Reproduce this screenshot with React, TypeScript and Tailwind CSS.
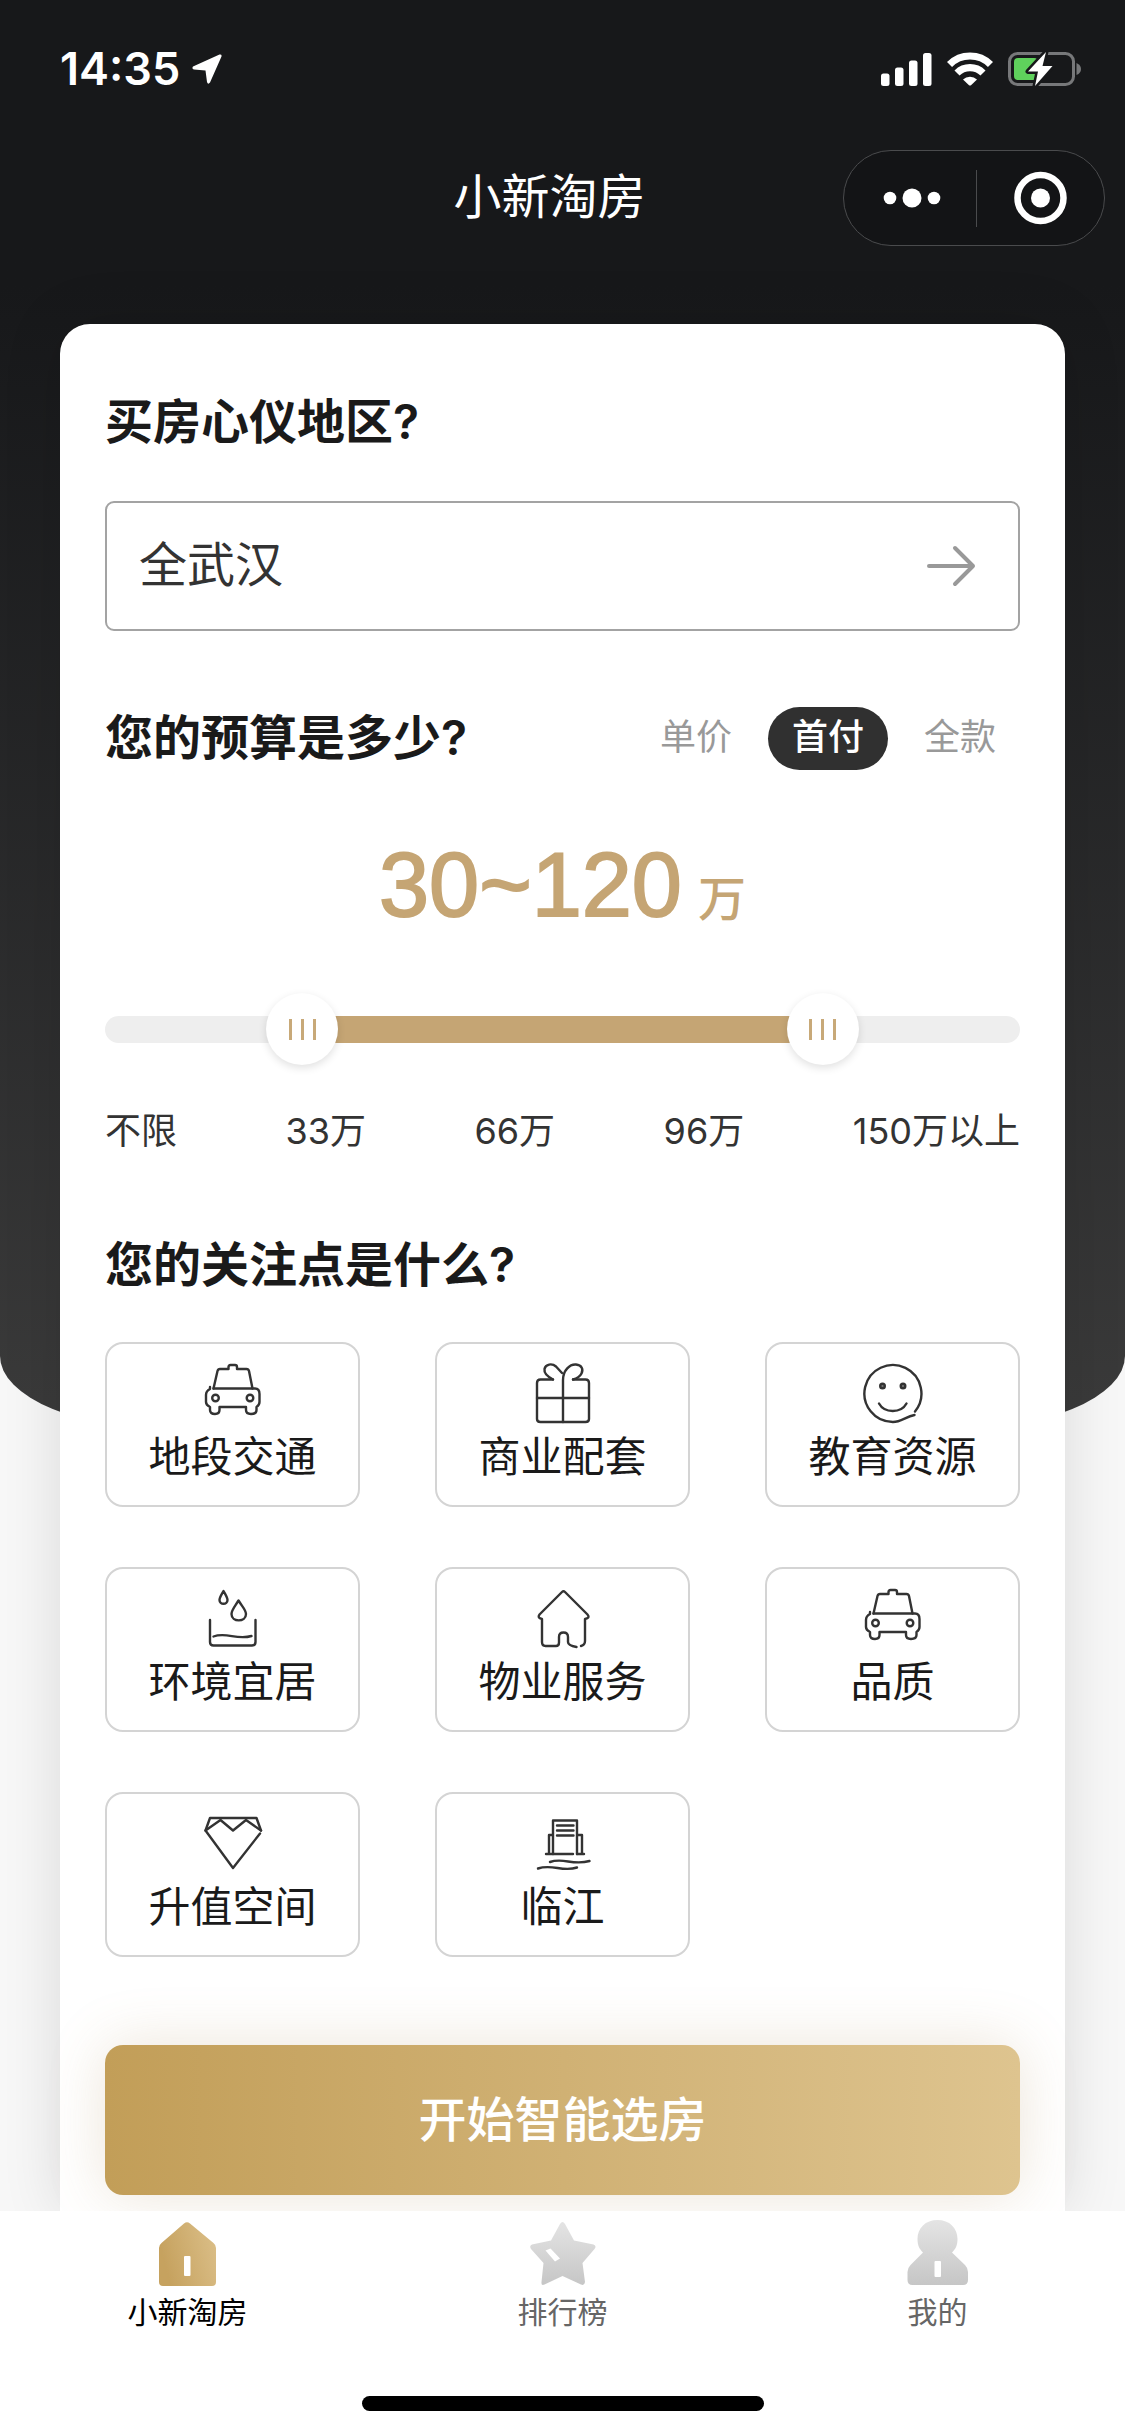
import React, { useState } from 'react'

interface IconProps {
  className?: string;
}

interface FocusItem {
  label: string;
  Icon: React.FC<IconProps>;
}

const LineIcon: React.FC<{ children: React.ReactNode }> = ({ children }) => (
  <svg
    viewBox="0 0 60 62"
    className="w-[60px] h-[62px]"
    fill="none"
    stroke="#333333"
    strokeWidth="2.400"
    strokeLinecap="round"
    strokeLinejoin="round"
    aria-hidden="true"
  >
    {children}
  </svg>
);

const CarIcon = () => (
  <LineIcon>
    <path d="M10.500 26.500 14.500 9Q15 7 17 7H25.500V5Q25.500 3 27.500 3H32Q34 3 34 5V7H43.500Q45.500 7 46 9L49.500 26.500" />
    <path d="M10.500 26.500H52Q56.500 26.500 56.500 32V40Q56.500 43 53.500 45V48Q53.500 52 48 52 43 52 43 48V45H16.500V48Q16.500 52 12 52 7 52 7 48V45Q3 43 3 40V33Q3 29 7 27V25" />
    <circle cx="12.500" cy="36" r="3.300" />
    <circle cx="47" cy="36" r="3.300" />
  </LineIcon>
);

const GiftIcon = () => (
  <LineIcon>
    <path d="M20 17.500H7.500Q4 17.500 4 21V57Q4 60 7.500 60H52.500Q56 60 56 57V21Q56 17.500 52.500 17.500H40" />
    <path d="M20 17.500C13.500 14 11 10 11.500 7 12.500 2 19 1 23 4.500L29 11" />
    <path d="M30 60V18C30 8 37 2 43 2.500 49 3 50.500 7.500 48.500 11.500 47 14.500 44 16.500 40 17.500" />
    <path d="M4 36H56" />
  </LineIcon>
);

const SmileIcon = () => (
  <LineIcon>
    <path d="M52 49.500A28.500 28.500 0 1 0 30 60C38 60 43 54.500 51.500 53" />
    <circle cx="19.500" cy="24" r="2.300" fill="#777777" />
    <circle cx="40" cy="24" r="2.300" fill="#777777" />
    <path d="M16 41.500C21.500 51.500 38 51.500 43.500 41.500" />
  </LineIcon>
);

const WaterIcon = () => (
  <LineIcon>
    <path d="M20.500 4C18 8.500 16.500 10.500 16.500 13 16.500 18 24.500 18 24.500 13 24.500 10.500 23 8.500 20.500 4Z" />
    <path d="M35.500 13.500C31.500 20 28.500 23 28.500 27 28.500 35.500 43 35.500 43 27 43 23 39.500 20 35.500 13.500Z" />
    <path d="M7 33V55Q7 58.500 10.500 58.500H49Q52.500 58.500 52.500 55V33" />
    <path d="M10.500 49.500C23.500 44.500 33.500 53.500 48.500 49" />
  </LineIcon>
);

const HouseIcon = () => (
  <LineIcon>
    <path d="M48 59Q52 58 52 54V32Q57.500 31 54.500 27.500L32 5Q30.500 3.500 29 5L6.500 27.500Q4 31 9 32V55Q9 59 12.500 59H23Q26 59 26 55.500V50Q26 45.500 30.500 45.500 35 45.500 35 50V55Q35 58.500 43.500 60" />
  </LineIcon>
);

const DiamondIcon = () => (
  <LineIcon>
    <path d="M58 18.500 53.500 6H7L2.500 18.500 30 56 57 21.500" />
    <path d="M2.500 18.500 17.500 8 30 18.500 43 8 58 18.500" />
  </LineIcon>
);

const RiverIcon = () => (
  <LineIcon>
    <path d="M20 42V8.500H44V42" />
    <path d="M24 13.500H40.500M24 18.500H40.500M24 23.500H40.500" />
    <path d="M19.500 23H16V42M44.500 23H49V42M13 42H40M44 42H51" />
    <path d="M17 50C30.500 45 39.500 54 56.500 49M5 56.500C19.500 51.500 29.500 60.500 44 55.500" />
  </LineIcon>
);

const TabHomeIcon = () => (
  <svg viewBox="0 0 66 66" className="w-[66px] h-[66px]" aria-hidden="true">
    <defs>
      <linearGradient id="tabGold" x1="0" x2="1" y1="0.3" y2="0">
        <stop offset="0" stopColor="#c6a25f" />
        <stop offset="1" stopColor="#dcc08a" />
      </linearGradient>
    </defs>
    <path d="M29 3.500Q32 1 35 3.500L58.500 23Q61 25 61 28V62Q61 66 57 66H8Q4 66 4 62V28Q4 25 6.500 23Z" fill="url(#tabGold)" />
    <rect x="29" y="36" width="6.500" height="20" rx="1" fill="#ffffff" />
  </svg>
);

const TabStarIcon = () => (
  <svg viewBox="0 0 66 66" className="w-[66px] h-[66px]" aria-hidden="true">
    <defs>
      <linearGradient id="tabGray" x1="0" x2="0" y1="0" y2="1">
        <stop offset="0" stopColor="#e4e4e4" />
        <stop offset="1" stopColor="#c6c6c6" />
      </linearGradient>
    </defs>
    <path d="M30 4Q32.500 0 35 4L44 20.500 63.500 24.500Q67 26 64.500 29L52.500 43 55 62Q54.500 66 51 64.500L32.500 56 14.500 64.500Q11 66 11.500 62L13.500 43 1 29Q-1 26 2 24.500L21 20.500Z" fill="url(#tabGray)" />
    <path d="M15.500 30.500 20.500 28.500 30 38.500 25 41.500Z" fill="#ffffff" />
  </svg>
);

const TabUserIcon = () => (
  <svg viewBox="0 0 66 66" className="w-[66px] h-[66px]" aria-hidden="true">
    <path d="M32.500 0C44.500 0 52.500 8 52.500 19 52.500 25.500 50.500 29 47 32.500L60 45Q63 48 63 52V60Q63 65 58 65H7.500Q2.500 65 2.500 60V52Q2.500 48 5.500 45L18 32.500C14.500 29 12.500 25.500 12.500 19 12.500 8 20.500 0 32.500 0Z" fill="url(#tabGray)" />
    <rect x="29.500" y="41" width="6.500" height="16" rx="1" fill="#ffffff" />
  </svg>
);

const focusItems: FocusItem[] = [
  { label: "地段交通", Icon: CarIcon },
  { label: "商业配套", Icon: GiftIcon },
  { label: "教育资源", Icon: SmileIcon },
  { label: "环境宜居", Icon: WaterIcon },
  { label: "物业服务", Icon: HouseIcon },
  { label: "品质", Icon: CarIcon },
  { label: "升值空间", Icon: DiamondIcon },
  { label: "临江", Icon: RiverIcon },
];

const tabs = [
  { label: "小新淘房", Icon: TabHomeIcon, active: true },
  { label: "排行榜", Icon: TabStarIcon, active: false },
  { label: "我的", Icon: TabUserIcon, active: false },
];

const priceTypes = ["单价", "首付", "全款"];
const marks = ["不限", "33万", "66万", "96万", "150万以上"];
const MAX_PRICE = 150;

const rangeClass =
  "absolute inset-y-0 -left-3 -right-3 h-[72px] appearance-none bg-transparent pointer-events-none outline-none [&::-webkit-slider-thumb]:appearance-none [&::-webkit-slider-thumb]:pointer-events-auto [&::-webkit-slider-thumb]:w-[72px] [&::-webkit-slider-thumb]:h-[72px] [&::-webkit-slider-thumb]:rounded-full [&::-webkit-slider-thumb]:bg-white [&::-webkit-slider-thumb]:bg-[repeating-linear-gradient(90deg,#c8a978_0_3px,transparent_3px_12px)] [&::-webkit-slider-thumb]:bg-[length:27px_21px] [&::-webkit-slider-thumb]:bg-center [&::-webkit-slider-thumb]:bg-no-repeat [&::-webkit-slider-thumb]:shadow-[0_3px_9px_rgba(0,0,0,0.12)]";

const StatusBar = () => (
  <div className="flex h-[132px] items-center justify-between pl-[60px] pr-[43px] pt-1.5 text-white">
    <div className="flex items-center gap-3">
      <span className="text-[45px] leading-[48px] font-semibold">14:35</span>
      <svg viewBox="0 0 30 30" className="w-[30px] h-[30px]" fill="currentColor" aria-hidden="true">
        <path d="M27.500.5 1 12.500Q-.5 15 2 15.500L13.500 16.500 15 28Q16 31 18 28.500L29.500 2.500Q30 0 27.500.5Z" />
      </svg>
    </div>
    <div className="flex items-center gap-[15px]">
      <svg viewBox="0 0 51 33" className="w-[51px] h-[33px]" fill="currentColor" aria-hidden="true">
        <rect x="0" y="20.500" width="8.500" height="12.500" rx="2.500" />
        <rect x="14" y="14.500" width="8.500" height="18.500" rx="2.500" />
        <rect x="28" y="7.500" width="8.500" height="25.500" rx="2.500" />
        <rect x="42" y="0" width="8.500" height="33" rx="2.500" />
      </svg>
      <svg viewBox="0 0 46 34" className="w-[46px] h-[34px]" aria-hidden="true">
        <g fill="none" stroke="currentColor" strokeWidth="7.200">
          <path d="M2.500 12.500A29 29 0 0 1 43.500 12.500" />
          <path d="M10 21A18.500 18.500 0 0 1 36 21" />
        </g>
        <path d="M16 27.500A10 10 0 0 1 30 27.500L24 33.200Q23 34 22 33.200Z" fill="currentColor" />
      </svg>
      <svg viewBox="0 0 74 36" className="w-[74px] h-[36px]" aria-hidden="true">
        <rect x="1.500" y="2.500" width="64" height="31" rx="8" fill="none" stroke="#77787a" strokeWidth="3" />
        <path d="M68.500 12Q73 14 73 18T68.500 24Z" fill="#77787a" />
        <rect x="6" y="7" width="24" height="22" rx="4" fill="#5fd15c" />
        <path d="M38 1 20 20.500H30L27 35 44.500 15H34.500Z" fill="#ffffff" stroke="#17181a" strokeWidth="5" strokeLinejoin="round" paintOrder="stroke" />
      </svg>
    </div>
  </div>
);

const NavBar = () => (
  <header className="grid h-[132px] grid-cols-[1fr_auto_1fr] items-center pr-5 text-white">
    <h1 className="col-start-2 pb-[3px] pr-1.5 text-[48px] leading-[72px]">小新淘房</h1>
    <div className="flex h-24 w-[262px] items-center justify-self-end rounded-full border border-[#4a4b4d] bg-[#131416]">
      <button type="button" aria-label="更多" className="flex h-full flex-1 items-center justify-center pl-1">
        <svg viewBox="0 0 60 24" className="w-[60px] h-6" fill="currentColor" aria-hidden="true">
          <circle cx="8" cy="12" r="6.300" />
          <circle cx="30" cy="12" r="9.500" />
          <circle cx="52" cy="12" r="6.300" />
        </svg>
      </button>
      <span className="h-[57px] w-px bg-[#4a4b4d]" />
      <button type="button" aria-label="关闭" className="flex h-full flex-1 items-center justify-center">
        <svg viewBox="0 0 54 54" className="w-[54px] h-[54px]" aria-hidden="true">
          <circle cx="27.500" cy="27" r="23" fill="none" stroke="currentColor" strokeWidth="6.500" />
          <circle cx="27.500" cy="27" r="9.500" fill="currentColor" />
        </svg>
      </button>
    </div>
  </header>
);

const BudgetSlider = () => {
  const [low, setLow] = useState(30)
  const [high, setHigh] = useState(120)

  const fill = {
    left: `${(low / MAX_PRICE) * 100}%`,
    right: `${100 - (high / MAX_PRICE) * 100}%`,
  };

  return (
    <div>
      <p className="mt-[51px] flex h-[120px] items-baseline justify-center gap-4 text-[#c5a574]">
        <span className="font-['Liberation_Sans',sans-serif] text-[90px] leading-[120px] [-webkit-text-stroke:2px_#c5a574]">
          {low}~{high}
        </span>
        <span className="text-[48px] font-medium">万</span>
      </p>
      <div className="relative mt-12 flex h-[72px] items-center">
        <div className="relative h-[27px] w-full overflow-hidden rounded-full bg-[#eeeeee]">
          <div className="absolute inset-y-0 bg-[#c5a574]" style={fill} />
        </div>
        <input
          type="range"
          aria-label="最低预算"
          min={0}
          max={MAX_PRICE}
          value={low}
          onChange={(e) => setLow(Math.min(Number(e.target.value), high - 1))}
          className={rangeClass}
        />
        <input
          type="range"
          aria-label="最高预算"
          min={0}
          max={MAX_PRICE}
          value={high}
          onChange={(e) => setHigh(Math.max(Number(e.target.value), low + 1))}
          className={rangeClass}
        />
      </div>
      <div className="mt-[42px] flex justify-between text-[36px] leading-[48px] text-[#333333]">
        {marks.map((mark) => (
          <span key={mark}>{mark}</span>
        ))}
      </div>
    </div>
  );
};

const App: React.FC = () => {
  const [priceType, setPriceType] = useState("首付")
  const [picked, setPicked] = useState<string[]>([])

  const togglePicked = (label: string) => {
    setPicked((prev) =>
      prev.includes(label) ? prev.filter((p) => p !== label) : [...prev, label]
    );
  };

  return (
    <div className="relative isolate flex min-h-screen flex-col bg-[#f7f7f7] font-['Inter','Noto_Sans_CJK_SC',sans-serif] text-[#1a1a1a]">
      {/* dark backdrop behind the header and the top of the card */}
      <div className="absolute inset-x-0 top-0 -z-10 h-[1431px] rounded-b-[180px_75px] bg-linear-to-b from-[#17181a] from-20% to-[#3b3b3b]" />

      <StatusBar />
      <NavBar />

      <main className="mx-[60px] mt-[60px] flex-1 rounded-t-[30px] bg-white px-[45px] pb-[15px] pt-[62px] shadow-[0_0_60px_rgba(0,0,0,0.12)]">
        <section>
          <h2 className="text-[48px] leading-[72px] font-semibold">买房心仪地区?</h2>
          <button
            type="button"
            className="mt-[43px] flex h-[130px] w-full items-center justify-between rounded-[9px] border-2 border-[#a3a3a3] pl-8 pr-[42px] text-[48px] text-[#333333]"
          >
            <span className="pb-[3px]">全武汉</span>
            <svg viewBox="0 0 50 42" className="w-[50px] h-[42px]" fill="none" stroke="#999999" strokeWidth="4" strokeLinecap="round" strokeLinejoin="round" aria-hidden="true">
              <path d="M3 21H47M29 3 47 21 29 39" />
            </svg>
          </button>
        </section>

        <section>
          <div className="mt-[71px] flex items-center justify-between">
            <h2 className="text-[48px] leading-[72px] font-semibold">您的预算是多少?</h2>
            <div className="flex gap-3">
              {priceTypes.map((type) => (
                <button
                  key={type}
                  type="button"
                  aria-pressed={type === priceType}
                  onClick={() => setPriceType(type)}
                  className={
                    type === priceType
                      ? "h-[63px] w-[120px] rounded-full bg-[#303030] pb-[3px] text-[36px] leading-[48px] font-medium text-white"
                      : "h-[63px] w-[120px] rounded-full pb-[3px] text-[36px] leading-[48px] text-[#999999]"
                  }
                >
                  {type}
                </button>
              ))}
            </div>
          </div>
          <BudgetSlider />
        </section>

        <section>
          <h2 className="mt-[74px] text-[48px] leading-[72px] font-semibold">您的关注点是什么?</h2>
          <div className="mt-[41px] grid grid-cols-3 gap-x-[75px] gap-y-[60px]">
            {focusItems.map(({ label, Icon }) => (
              <button
                key={label}
                type="button"
                aria-pressed={picked.includes(label)}
                onClick={() => togglePicked(label)}
                className={`flex h-[165px] flex-col items-center rounded-[18px] border-2 pt-[18px] ${
                  picked.includes(label) ? "border-[#c5a574]" : "border-[#d4d4d4]"
                }`}
              >
                <Icon />
                <span className="mt-1.5 text-[42px] leading-[54px]">{label}</span>
              </button>
            ))}
          </div>
        </section>

        <button
          type="button"
          className="mt-[88px] h-[150px] w-full rounded-[18px] bg-linear-to-r from-[#c29e58] to-[#dec48f] text-[48px] font-medium text-white shadow-[0_0_60px_rgba(160,120,60,0.2)]"
        >
          开始智能选房
        </button>
      </main>

      <footer className="relative bg-white pb-[25px] pt-[9px]">
        <nav className="grid grid-cols-3">
          {tabs.map(({ label, Icon, active }) => (
            <a
              key={label}
              href="#"
              aria-current={active ? "page" : undefined}
              className={`flex flex-col items-center gap-2 text-[30px] leading-[36px] ${
                active ? "text-black" : "text-[#666666]"
              }`}
            >
              <Icon />
              {label}
            </a>
          ))}
        </nav>
        <div className="mx-auto mt-[66px] h-[15px] w-[402px] rounded-full bg-black" />
      </footer>
    </div>
  );
};

export default App
